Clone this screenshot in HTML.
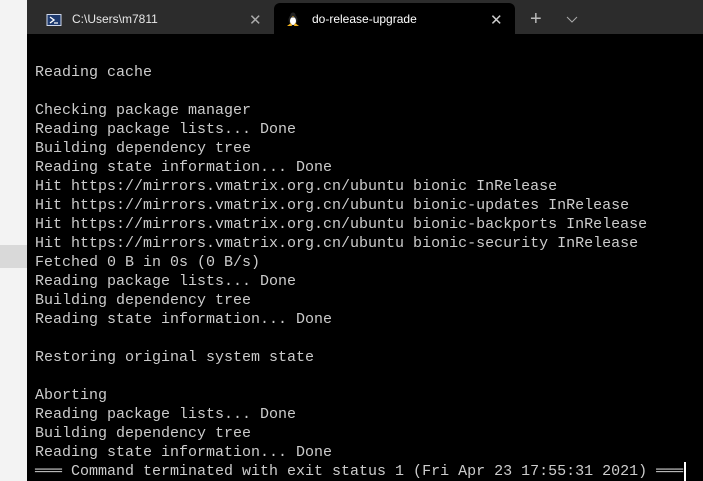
<!DOCTYPE html>
<html><head><style>
body{margin:0;width:703px;height:481px;background:#f3f3f3;position:relative;overflow:hidden;font-family:"Liberation Sans",sans-serif}
#gb{position:absolute;left:0;top:245px;width:27px;height:23px;background:#d9d9d9}
#win{position:absolute;left:27px;top:0;width:676px;height:481px;background:#000}
#bar{position:absolute;left:0;top:0;width:676px;height:34px;background:#2c2c2c}
.tab{position:absolute;top:3px;height:31px;color:#fff;font-size:12px;line-height:33px}
#t2{left:247px;width:241px;background:#000;border-radius:6px 6px 0 0}
.x{position:absolute;color:#aaa;font-size:15px}
pre{position:absolute;left:8px;top:63px;margin:0;font-family:"Liberation Mono","DejaVu Sans Mono",monospace;font-size:15px;line-height:19px;color:#ccc;letter-spacing:0}
</style></head><body>
<div id="gb"></div>
<div id="win">
<div id="bar">
<div class="tab" style="left:0;width:247px">
<svg style="position:absolute;left:19px;top:11px" width="16" height="12" viewBox="0 0 16 12"><rect x="1" y="0.5" width="14" height="11" fill="#1e3a6e" stroke="#cfd8ea"/><path d="M4 3l4 3-4 3" stroke="#fff" fill="none" stroke-width="1.4"/><path d="M8 9h4" stroke="#fff" stroke-width="1.2"/></svg>
<span style="position:absolute;left:45px;color:#e8e8e8">C:\Users\m7811</span>
<span class="x" style="left:222px;top:1px">✕</span></div>
<div class="tab" id="t2">
<svg style="position:absolute;left:12px;top:8px" width="14" height="16" viewBox="0 0 14 16"><ellipse cx="7" cy="9" rx="4.5" ry="5.5" fill="#222"/><ellipse cx="7" cy="10" rx="3" ry="4" fill="#fff"/><circle cx="7" cy="4" r="2.5" fill="#222"/><path d="M1 15l4-3 1 3zM13 15l-4-3-1 3z" fill="#f2b21b"/><path d="M6 5l1 1 1-1z" fill="#f2b21b"/></svg>
<span style="position:absolute;left:38px">do-release-upgrade</span>
<span class="x" style="left:216px;top:1px;color:#ccc">✕</span></div>
<span class="x" style="left:503px;top:8px;font-size:20px;color:#bbb">+</span>
<svg style="position:absolute;left:539px;top:16px" width="12" height="7"><path d="M1 1l5 5 5-5" stroke="#aaa" fill="none"/></svg>
</div>
<pre>Reading cache

Checking package manager
Reading package lists... Done
Building dependency tree
Reading state information... Done
Hit https://mirrors.vmatrix.org.cn/ubuntu bionic InRelease
Hit https://mirrors.vmatrix.org.cn/ubuntu bionic-updates InRelease
Hit https://mirrors.vmatrix.org.cn/ubuntu bionic-backports InRelease
Hit https://mirrors.vmatrix.org.cn/ubuntu bionic-security InRelease
Fetched 0 B in 0s (0 B/s)
Reading package lists... Done
Building dependency tree
Reading state information... Done

Restoring original system state

Aborting
Reading package lists... Done
Building dependency tree
Reading state information... Done
═══ Command terminated with exit status 1 (Fri Apr 23 17:55:31 2021) ═══</pre>
<div style="position:absolute;left:657px;top:462px;width:2px;height:19px;background:#fff"></div>
</div>
</body></html>
